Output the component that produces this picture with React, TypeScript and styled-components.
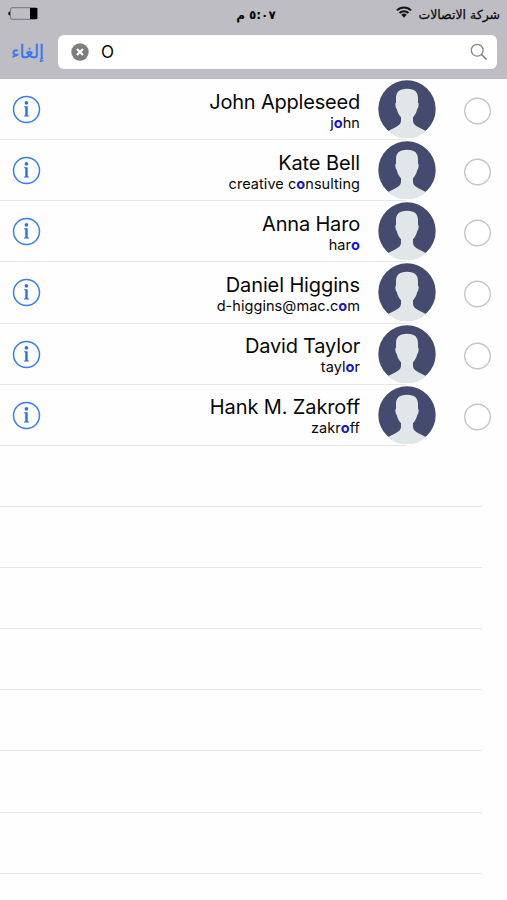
import React from "react";
import styled, { createGlobalStyle } from "styled-components";

const Global = createGlobalStyle`
  *, *::before { box-sizing: border-box; }
  html, body { margin: 0; background: #fefefe; overflow: hidden; }
`;
const Screen = styled.main`
  width: 507px;
  height: 900px;
  overflow: hidden;
  background: #fefefe;
  color: #080808;
  font-family: Inter, "DejaVu Sans", sans-serif;
`;
const Header = styled.header`
  height: 79px;
  background: #bebdc3;
  border-bottom: 1px solid #bbbabf;
`;
const StatusBar = styled.div`
  height: 35px;
  display: grid;
  grid-template-columns: 1fr auto 1fr;
  align-items: start;
  padding: 0 7px 0 7px;
`;
const Battery = styled.svg`
  display: block;
  margin-top: 7px;
`;
const Time = styled.span`
  display: flex;
  direction: rtl;
  gap: 4px;
  margin-top: 6px;
  margin-left: 5px;
  font: bold 12px/18px "DejaVu Sans", sans-serif;
`;
const Carrier = styled.div`
  display: flex;
  justify-content: flex-end;
  gap: 6px;
  font: 12.5px/18px "DejaVu Sans", sans-serif;
  -webkit-text-stroke: 0.25px #111;
  padding-top: 6px;
  svg { margin-top: 0; }
`;
const SearchRow = styled.div`
  display: flex;
  height: 34px;
  padding: 0 10px 0 11px;
`;
const Cancel = styled.button`
  width: 47px;
  height: 34px;
  padding: 0;
  border: 0;
  background: none;
  color: #3479ec;
  text-align: left;
  -webkit-text-stroke: 0.3px #3479ec;
  font: 18px/34px "DejaVu Sans", sans-serif;
`;
const SearchField = styled.div`
  flex: 1;
  height: 34px;
  display: flex;
  align-items: center;
  border-radius: 6px;
  background: #fff;
  padding: 0 9px 0 13px;
`;
const Query = styled.span`
  flex: 1;
  padding-left: 12px;
  font-size: 17px;
  line-height: 34px;
`;
const List = styled.section`
  direction: ltr;
`;
const Row = styled.div<{ $inset: number }>`
  height: 61.13px;
  display: flex;
  align-items: flex-start;
  padding: 0 16px 0 12px;
  background: linear-gradient(#e6e6e8, #e6e6e8) left bottom / calc(100% - ${p => p.$inset}px) 1px no-repeat;
`;
const InfoIcon = styled.svg`
  flex: none;
  margin-top: 16px;
`;
const Labels = styled.div`
  flex: 1;
  text-align: right;
  padding: 9.7px 18px 0 0;
`;
const Name = styled.div<{ $tracking: number }>`
  font-size: 20px;
  line-height: 26px;
  letter-spacing: ${p => p.$tracking}px;
`;
const Match = styled.div`
  font-size: 14.5px;
  line-height: 18px;
  margin-top: -1px;
  letter-spacing: 0.06px;
`;
const Hit = styled.b`
  color: #1512e0;
`;
const Portrait = styled.svg`
  flex: none;
  margin-top: 1px;
`;
const Select = styled.svg`
  flex: none;
  margin: 18px 0 0 28px;
`;

const Info = () => (
  <InfoIcon width="29" height="29" viewBox="0 0 29 29">
    <circle cx="14.5" cy="14.5" r="13" fill="none" stroke="#397df0" strokeWidth="1.5" />
    <circle cx="14.4" cy="7.9" r="1.8" fill="#2870e8" />
    <path d="M12 11.3h3.7v9l1.4.5v.8h-5.1v-.8l1.3-.5v-7.8l-1.3-.4z" fill="#2870e8" />
  </InfoIcon>
);

const Avatar = () => (
  <Portrait width="58" height="58" viewBox="0 0 58 58">
    <circle cx="29" cy="29" r="28.7" fill="#444b6e" />
    <path d="M29 8.8c-8.2 0-11 3.6-11 9.5v4.5c-.8.3-.8 1.2-.5 3 .2 1.8.6 2.7 1.3 3.1.7 3.5 2 6 4.2 8.3v3.5c-.2 3.4-2.6 5.1-6.4 7-2.6 1.3-4.8 2.3-6.6 3.6a28.7 28.7 0 0 0 38 0c-1.8-1.3-4-2.3-6.6-3.6-3.8-1.9-6.2-3.6-6.4-7v-3.5c2.2-2.3 3.5-4.8 4.2-8.3.7-.4 1.1-1.3 1.3-3.1.3-1.8.3-2.7-.5-3v-4.5c0-5.9-2.8-9.5-11-9.5z" fill="#e1e7e8" />
  </Portrait>
);

const contacts = [
  { name: "John Appleseed", parts: ["j", "hn"], tracking: -0.2 },
  { name: "Kate Bell", parts: ["creative c", "nsulting"], tracking: -0.1 },
  { name: "Anna Haro", parts: ["har", ""], tracking: -0.18 },
  { name: "Daniel Higgins", parts: ["d-higgins@mac.c", "m"], tracking: -0.12 },
  { name: "David Taylor", parts: ["tayl", "r"], tracking: -0.2 },
  { name: "Hank M. Zakroff", parts: ["zakr", "ff"], tracking: -0.12 },
];

export default function App() {
  return (
    <Screen>
      <Global />
      <Header>
        <StatusBar>
          <Battery width="32" height="14" viewBox="0 0 32 14">
            <rect x="3.5" y=".7" width="26.5" height="11.6" rx="1.5" fill="none" stroke="#77767a" />
            <path d="M23 1h7.3v11H23z" fill="#030303" />
            <path d="M3 4.5v4C.5 8 .5 5 3 4.5z" fill="#111" />
          </Battery>
          <Time><span>٥:٠٧</span><span>م</span></Time>
          <Carrier>
            <svg width="16" height="13" viewBox="0 0 16 13">
              <path d="M1 4.4a10 10 0 0 1 14 0M3.5 7a6.4 6.4 0 0 1 9 0" fill="none" stroke="#151515" strokeWidth="2" />
              <path d="M5.3 8.8a3.8 3.8 0 0 1 5.4 0L8 11.7z" fill="#151515" />
            </svg>
            <span dir="rtl">شركة الاتصالات</span>
          </Carrier>
        </StatusBar>
        <SearchRow>
          <Cancel dir="rtl">إلغاء</Cancel>
          <SearchField>
            <svg width="18" height="18" viewBox="0 0 18 18">
              <circle cx="9" cy="9" r="8.7" fill="#7e7e80" />
              <path d="m6 6 6 6m0-6-6 6" stroke="#fff" strokeWidth="2" />
            </svg>
            <Query>O</Query>
            <svg width="18" height="18" viewBox="0 0 18 18" fill="none" stroke="#868689">
              <circle cx="7.2" cy="7.2" r="5.9" strokeWidth="1.3" />
              <path d="m11.5 11.5 5 5" strokeWidth="1.7" />
            </svg>
          </SearchField>
        </SearchRow>
      </Header>
      <List>
        {contacts.map(c => (
          <Row key={c.name} $inset={101}>
            <Info />
            <Labels>
              <Name $tracking={c.tracking}>{c.name}</Name>
              <Match>{c.parts[0]}<Hit>o</Hit>{c.parts[1]}</Match>
            </Labels>
            <Avatar />
            <Select width="27" height="28" viewBox="0 0 27 28">
              <circle cx="13.5" cy="14" r="12.8" fill="#fff" stroke="#c6c6c9" strokeWidth="1.4" />
            </Select>
          </Row>
        ))}
        {Array.from({ length: 7 }, (_, i) => <Row key={i} $inset={25} />)}
      </List>
    </Screen>
  );
}
